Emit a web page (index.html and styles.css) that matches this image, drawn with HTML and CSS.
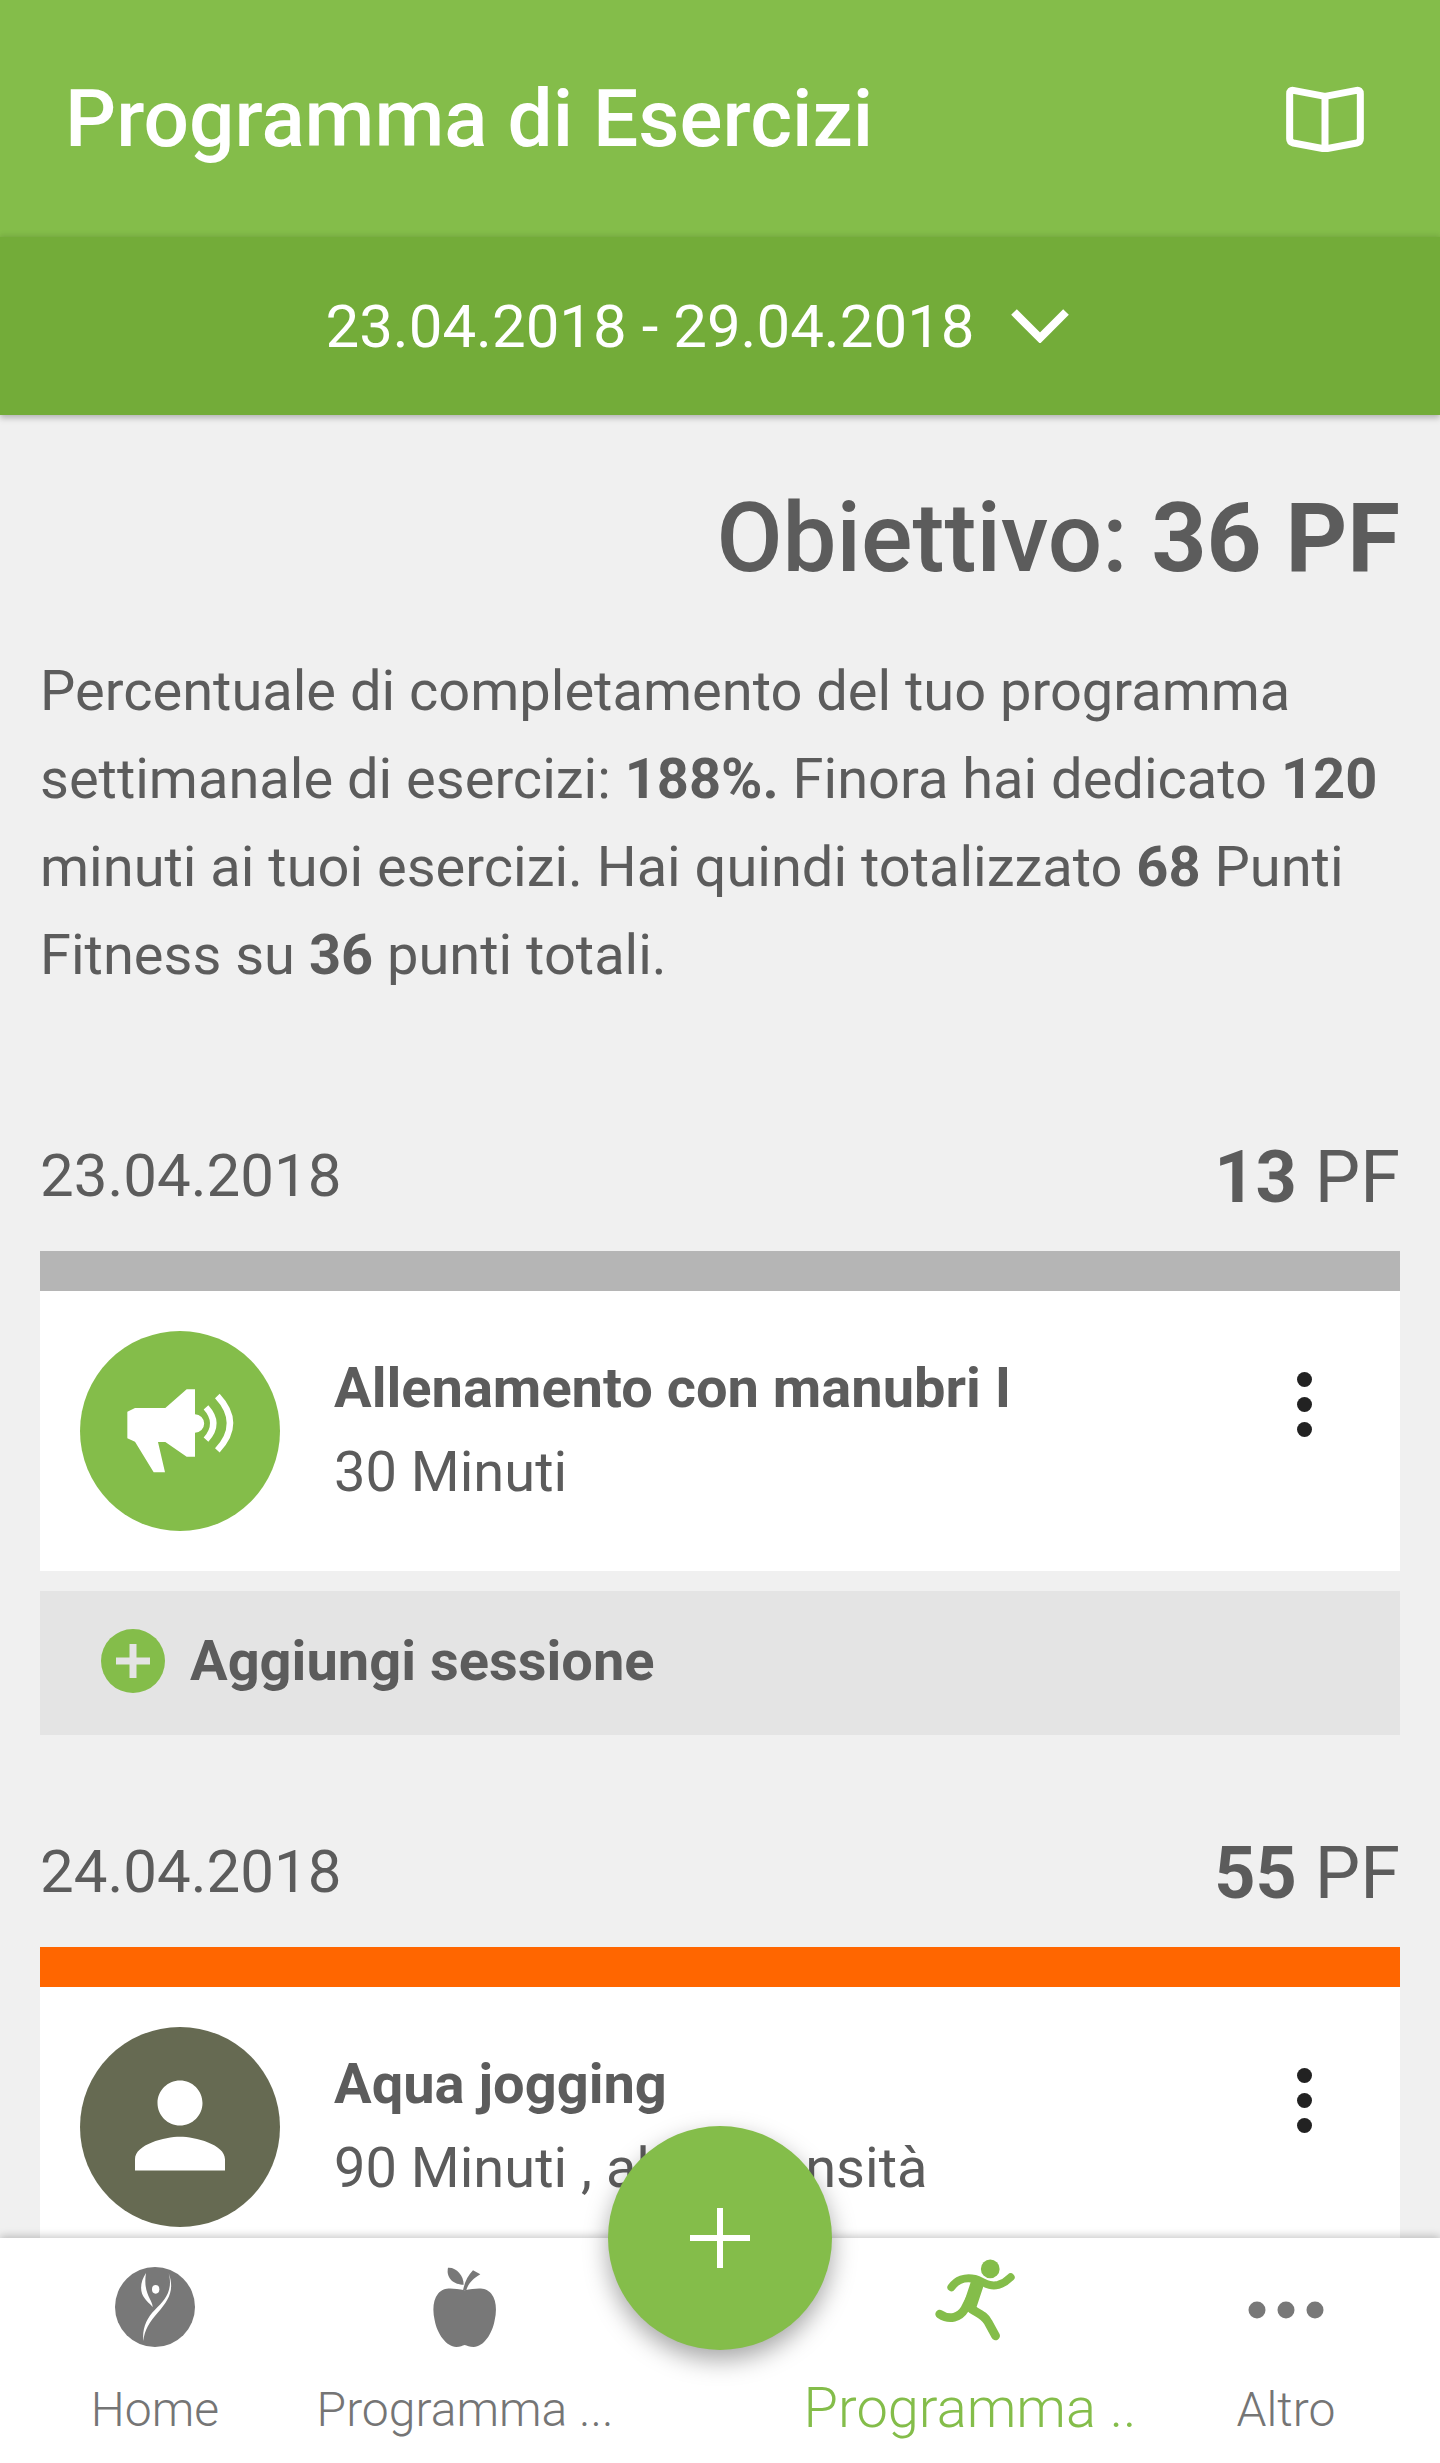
FILE: index.html
```html
<!DOCTYPE html>
<html lang="it">
<head>
    <meta charset="UTF-8">
    <meta name="viewport" content="width=device-width, initial-scale=1.0">
    <title>Programma di Esercizi</title>
    <link rel="stylesheet" href="styles.css">
</head>
<body>
    <div class="app">
        <header class="toolbar">
            <h1 class="toolbar-title">Programma di Esercizi</h1>
            <svg class="book-icon" viewBox="48 47 234 198">
                <path d="M59 70Q59 58 70 60L165 78L260 60Q271 58 271 70V205Q271 215 260 218L165 236L70 218Q59 215 59 205ZM165 78V236" fill="none" stroke="#fff" stroke-width="21" stroke-linejoin="round"/>
            </svg>
        </header>

        <div class="week-bar">
            <span class="week-label">23.04.2018 - 29.04.2018</span>
            <svg class="chevron" viewBox="0 0 58 34">
                <path d="M3 3L29 29L55 3" fill="none" stroke="#fff" stroke-width="8"/>
            </svg>
        </div>

        <main class="content">
            <div class="goal">Obiettivo: <b>36 PF</b></div>
            <p class="summary">Percentuale di completamento del tuo programma settimanale di esercizi: <b>188%.</b> Finora hai dedicato <b>120</b> minuti ai tuoi esercizi. Hai quindi totalizzato <b>68</b> Punti Fitness su <b>36</b> punti totali.</p>

            <section class="day">
                <div class="day-head">
                    <span class="day-date">23.04.2018</span>
                    <span class="day-points"><b>13</b> PF</span>
                </div>
                <div class="day-strip strip-grey"></div>
                <div class="session">
                    <div class="session-icon icon-green">
                        <svg viewBox="60 60 600 600">
                            <path d="M202 302L225 291H316L380 235H405V310A27 27 0 0 1 405 365V437H380L316 393H294L315 484H281L225 392L202 382Z" fill="#fff"/>
                            <path d="M438 289Q482 337 438 386M472 255Q548 337 472 418" fill="none" stroke="#fff" stroke-width="19"/>
                        </svg>
                    </div>
                    <div class="session-text">
                        <div class="session-name">Allenamento con manubri I</div>
                        <div class="session-info">30 Minuti</div>
                    </div>
                    <div class="kebab"><i></i><i></i><i></i></div>
                </div>
                <div class="add-session">
                    <svg class="add-icon" viewBox="0 0 64 64">
                        <circle cx="32" cy="32" r="32" fill="#84bd4a"/>
                        <path d="M32 15V49M15 32H49" stroke="#e4e4e4" stroke-width="7"/>
                    </svg>
                    <span>Aggiungi sessione</span>
                </div>
            </section>

            <section class="day">
                <div class="day-head">
                    <span class="day-date">24.04.2018</span>
                    <span class="day-points"><b>55</b> PF</span>
                </div>
                <div class="day-strip strip-orange"></div>
                <div class="session">
                    <div class="session-icon icon-olive">
                        <svg viewBox="0 0 200 200">
                            <path transform="translate(32.5 31) scale(5.625)" d="M12 12c2.21 0 4-1.79 4-4s-1.79-4-4-4-4 1.79-4 4 1.79 4 4 4zm0 2c-2.67 0-8 1.34-8 4v2h16v-2c0-2.66-5.33-4-8-4z" fill="#fff"/>
                        </svg>
                    </div>
                    <div class="session-text">
                        <div class="session-name">Aqua jogging</div>
                        <div class="session-info">90 Minuti , alta intensità</div>
                    </div>
                    <div class="kebab"><i></i><i></i><i></i></div>
                </div>
            </section>
        </main>

        <nav class="tabbar">
            <button class="fab">
                <svg viewBox="0 0 60 60"><path d="M30 0V60M0 30H60" stroke="#fff" stroke-width="6"/></svg>
            </button>
            <a class="tab">
                <svg class="tab-icon" viewBox="75 80 240 240">
                    <circle cx="195" cy="200" r="120" fill="#787878"/>
                    <ellipse cx="197" cy="147" rx="11" ry="13" fill="#fff"/>
                    <path d="M168 98C150 125 148 155 165 175C172 185 185 195 188 200C188 178 158 160 168 98Z" fill="#fff"/>
                    <path d="M236 98C250 150 225 180 195 208C170 232 156 265 160 302C163 270 178 245 205 215C235 180 255 150 236 98Z" fill="#fff"/>
                </svg>
                <span class="tab-label">Home</span>
            </a>
            <a class="tab">
                <svg class="tab-icon" viewBox="1030 80 190 240">
                    <path d="M1125 150C1090 145 1065 138 1045 160C1030 178 1028 210 1035 240C1042 280 1070 320 1100 320C1112 320 1118 316 1125 314C1132 316 1140 320 1152 320C1182 320 1208 280 1215 240C1222 210 1220 178 1205 160C1185 138 1160 145 1125 150Z" fill="#787878"/>
                    <path d="M1075 82C1100 80 1122 105 1122 133C1095 133 1068 115 1075 82Z" fill="#787878"/>
                    <path d="M1120 150C1125 125 1135 105 1150 90L1172 102C1150 115 1135 130 1130 150Z" fill="#787878"/>
                </svg>
                <span class="tab-label">Programma ...</span>
            </a>
            <div class="tab-gap"></div>
            <a class="tab tab-active">
                <svg class="tab-icon runner" viewBox="100 50 245 250">
                    <circle cx="271" cy="85" r="28" fill="#84bd4a"/>
                    <g fill="none" stroke="#84bd4a" stroke-linecap="round" stroke-linejoin="round">
                        <path d="M155 140C170 118 195 108 225 115C250 122 265 140 295 133C312 128 322 120 332 110" stroke-width="24"/>
                        <path d="M120 220C150 240 180 230 195 205L228 140" stroke-width="26"/>
                        <path d="M232 130L212 190" stroke-width="40"/>
                        <path d="M215 205C240 220 255 225 265 245L287 285" stroke-width="26"/>
                    </g>
                </svg>
                <span class="tab-label">Programma ..</span>
            </a>
            <a class="tab">
                <svg class="tab-icon dots" viewBox="0 0 80 80">
                    <circle cx="11" cy="40" r="8.5" fill="#787878"/>
                    <circle cx="40" cy="40" r="8.5" fill="#787878"/>
                    <circle cx="69" cy="40" r="8.5" fill="#787878"/>
                </svg>
                <span class="tab-label">Altro</span>
            </a>
        </nav>
    </div>
</body>
</html>
```

FILE: styles.css
```css
* {
    margin: 0;
    padding: 0;
    box-sizing: border-box;
}

body {
    font-family: Roboto, "Liberation Sans", sans-serif;
    background-color: #f0f0f0;
    color: #5c5c5c;
}

b {
    font-weight: 700;
}

.app {
    display: flex;
    flex-direction: column;
    height: 100vh;
    overflow: hidden;
}

.toolbar {
    display: flex;
    align-items: center;
    justify-content: space-between;
    height: 237px;
    padding: 0 76px 0 65px;
    background-color: #84bd4a;
}

.toolbar-title {
    font-size: 80.2px;
    font-weight: 500;
    color: #fff;
}

.book-icon {
    width: 78px;
    height: 66px;
}

.week-bar {
    position: relative;
    display: flex;
    align-items: center;
    justify-content: center;
    gap: 36px;
    height: 178px;
    padding-right: 46px;
    background-color: #73ac39;
    box-shadow: 0 3px 6px rgba(0,0,0,0.25), 0 -3px 5px rgba(0,0,0,0.06);
}

.week-label {
    font-size: 60px;
    color: #fff;
}

.chevron {
    width: 58px;
    height: 34px;
}

.content {
    flex: 1;
    min-height: 0;
    padding: 0 40px;
    overflow: hidden;
}

.goal {
    margin-top: 69px;
    font-size: 96px;
    font-weight: 500;
    line-height: 108px;
    text-align: right;
}

.summary {
    margin: 55px 0 126px;
    font-size: 56px;
    line-height: 88px;
}

.day-head {
    display: flex;
    align-items: center;
    justify-content: space-between;
    height: 100px;
    margin-top: 86px;
}

.day-date {
    font-size: 60px;
}

.day-points {
    padding-top: 5px;
    font-size: 72px;
}

.day-strip {
    height: 40px;
    margin-top: 26px;
}

.strip-grey {
    background-color: #b5b5b5;
}

.strip-orange {
    background-color: #ff6600;
}

.session {
    display: flex;
    gap: 54px;
    height: 280px;
    padding: 40px;
    background-color: #fff;
}

.session-icon {
    width: 200px;
    height: 200px;
    border-radius: 50%;
    flex-shrink: 0;
    overflow: hidden;
}

.session-icon svg {
    display: block;
    width: 100%;
    height: 100%;
}

.icon-green {
    background-color: #84bd4a;
}

.icon-olive {
    background-color: #666a52;
}

.session-text {
    flex: 1;
    padding-top: 15px;
}

.session-name {
    font-size: 56px;
    font-weight: 700;
    line-height: 84px;
}

.session-info {
    font-size: 56px;
    line-height: 84px;
}

.kebab {
    display: flex;
    flex-direction: column;
    gap: 10px;
    margin: 41px 48px 0 0;
}

.kebab i {
    display: block;
    width: 15px;
    height: 15px;
    border-radius: 50%;
    background-color: #222;
}

.add-session {
    display: flex;
    align-items: center;
    gap: 25px;
    height: 144px;
    margin-top: 20px;
    padding: 0 0 4px 61px;
    background-color: #e4e4e4;
    font-size: 56px;
    font-weight: 700;
}

.add-icon {
    width: 64px;
    height: 64px;
}

.tabbar {
    position: relative;
    display: grid;
    grid-template-columns: 310px 310px 188px 324px 308px;
    flex-shrink: 0;
    height: 225px;
    background-color: #fff;
    box-shadow: 0 -2px 8px rgba(0,0,0,0.22);
}

.fab {
    position: absolute;
    left: 608px;
    top: -112px;
    width: 224px;
    height: 224px;
    border: none;
    border-radius: 50%;
    background-color: #84bd4a;
    box-shadow: 0 10px 24px rgba(0,0,0,0.35);
    display: flex;
    align-items: center;
    justify-content: center;
}

.fab svg {
    width: 60px;
    height: 60px;
}

.tab {
    display: flex;
    flex-direction: column;
    align-items: center;
    padding-top: 29px;
    color: #757575;
}

.tab-icon {
    display: block;
    height: 80px;
}

.tab-label {
    margin-top: 33px;
    font-size: 48px;
    font-weight: 300;
    line-height: 60px;
    white-space: nowrap;
}

.tab-active {
    padding-top: 19px;
    color: #84bd4a;
}

.tab-active .tab-label {
    margin-top: 37px;
    font-size: 56px;
}

.runner {
    width: 82px;
    height: 84px;
    margin-left: 8px;
}

.dots {
    width: 80px;
    margin-top: 3px;
    margin-bottom: -3px;
}
```
